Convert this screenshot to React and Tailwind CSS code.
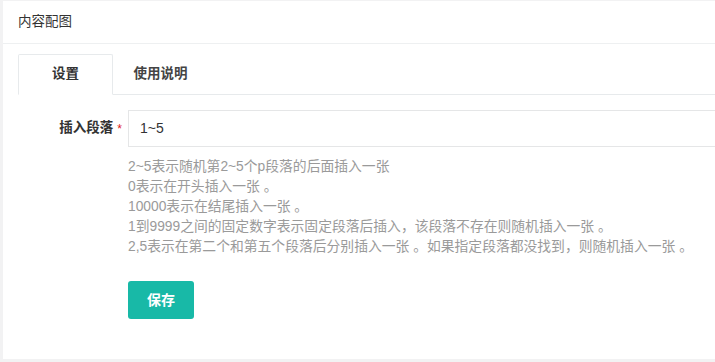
export default function App() {
  const lines = [
    "2~5表示随机第2~5个p段落的后面插入一张",
    "0表示在开头插入一张 。",
    "10000表示在结尾插入一张 。",
    "1到9999之间的固定数字表示固定段落后插入，该段落不存在则随机插入一张 。",
    "2,5表示在第二个和第五个段落后分别插入一张 。如果指定段落都没找到，则随机插入一张 。",
  ];
  return (
    <div className="w-[715px] h-[362px] overflow-hidden bg-[#f2f2f3] pl-[3px] pt-[1px] font-['Liberation_Sans','Noto_Sans_CJK_SC',sans-serif] text-[#333]">
      <div className="w-[730px] h-[358px] bg-white">
        <div className="h-[43px] border-b border-[#eef0f1] flex items-center pl-[15px] text-[13.5px] text-[#333]">
          内容配图
        </div>
        <div className="px-[15px] pt-[10px]">
          <div className="flex border-b border-[#e7eaec] h-[41px]">
            <div className="w-[95px] h-[41px] border border-[#e7eaec] border-b-white bg-white flex items-center justify-center text-[13.5px] font-bold text-[#333] rounded-t-[2px]">
              设置
            </div>
            <div className="w-[95px] flex items-center justify-center text-[13.5px] font-bold text-[#444]">
              使用说明
            </div>
          </div>
          <div className="flex mt-[15px]">
            <div className="w-[110px] flex justify-end items-start">
              <div className="h-[37px] flex items-center text-[13.5px] font-bold text-[#333]">
                插入段落<span className="text-[#e02020] font-normal text-[12px] ml-[4px] mr-[6px]">*</span>
              </div>
            </div>
            <div className="flex-1">
              <div className="h-[37px] border border-[#e5e6e7] flex items-center pl-[11px] text-[14px] text-[#333]">
                1~5
              </div>
              <div className="mt-[10px] text-[13.8px] leading-[20px] text-[#9a9a9a]">
                {lines.map((l) => (
                  <div key={l} className="whitespace-nowrap">{l}</div>
                ))}
              </div>
              <button className="mt-[24px] w-[66px] h-[38px] rounded-[3px] bg-[#18b9a7] text-white text-[14px] font-bold flex items-center justify-center">
                保存
              </button>
            </div>
          </div>
        </div>
      </div>
    </div>
  );
}
